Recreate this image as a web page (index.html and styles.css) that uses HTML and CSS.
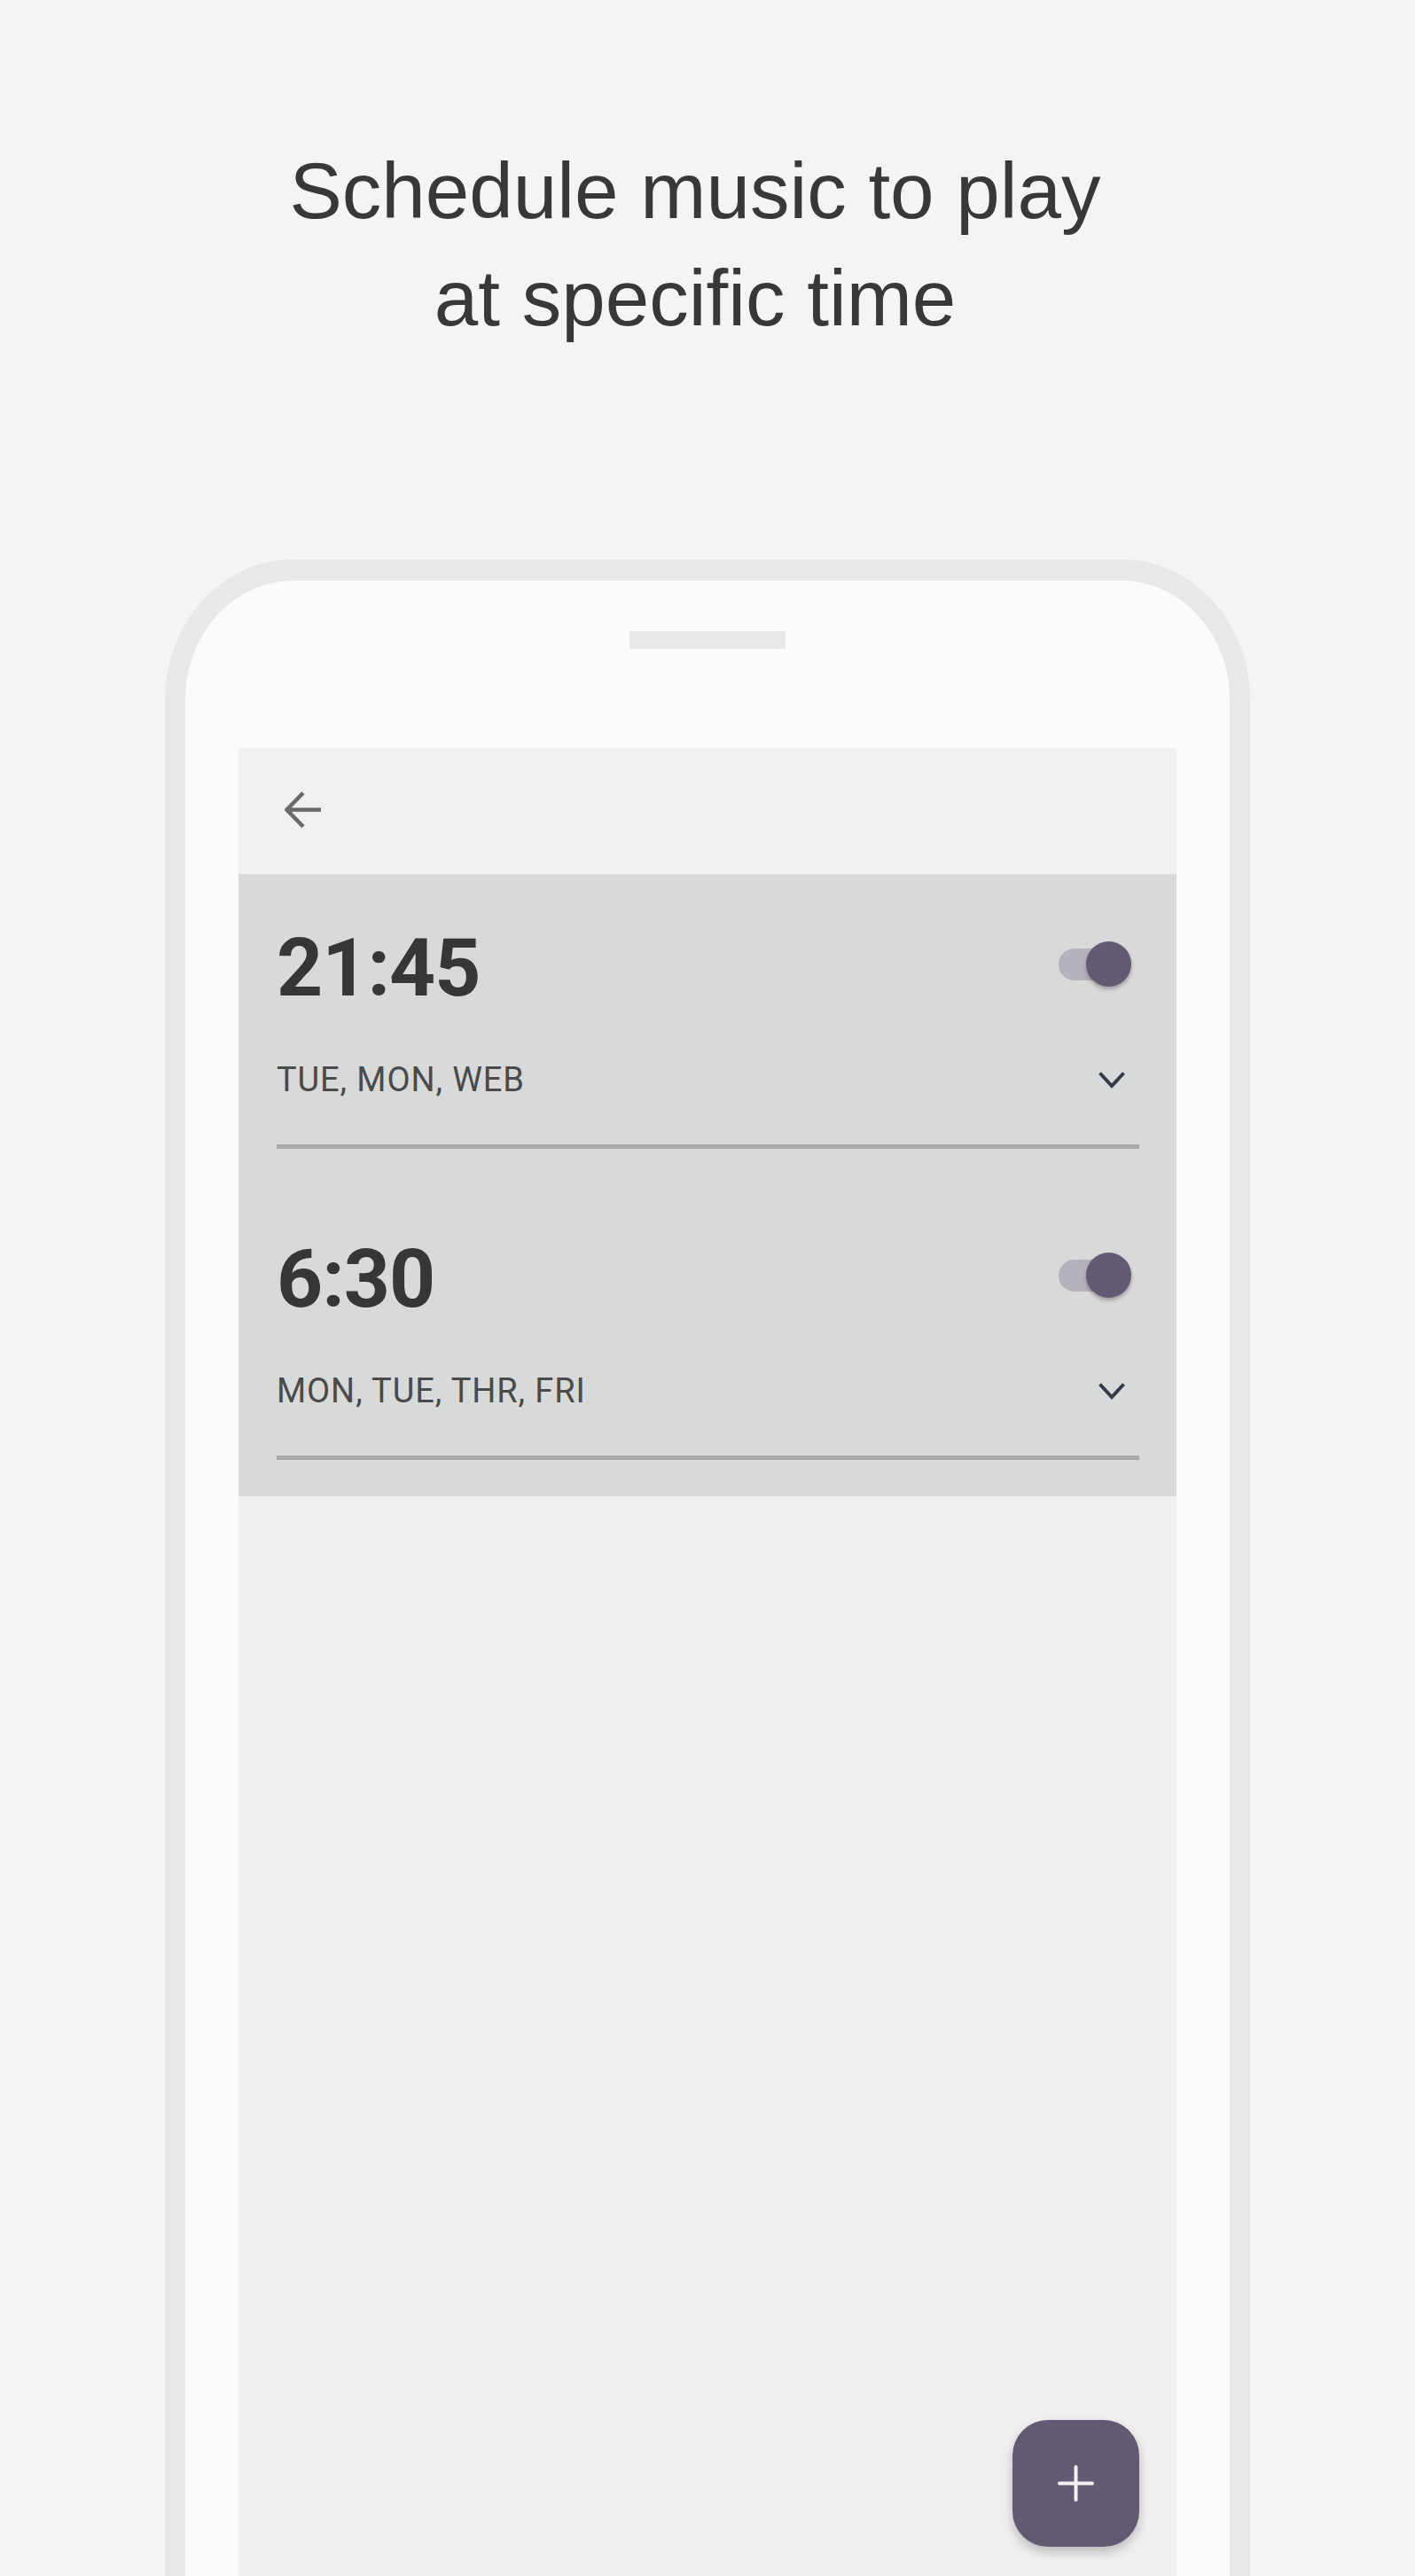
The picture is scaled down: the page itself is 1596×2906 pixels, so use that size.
FILE: index.html
```html
<!DOCTYPE html>
<html lang="en">
<head>
    <meta charset="UTF-8">
    <meta name="viewport" content="width=device-width, initial-scale=1.0">
    <title>Schedule music</title>
    <link rel="stylesheet" href="styles.css">
</head>
<body>
    <h1 class="headline">Schedule music to play<br>at specific time</h1>

    <div class="phone">
        <div class="phone-inner">
            <div class="speaker"></div>

            <div class="screen">
                <div class="app-bar">
                    <svg class="back-icon" width="41" height="41" viewBox="0 0 41 41">
                        <path d="M41 20.5H3M21 1.5L2.5 20.5L21 39.5" fill="none" stroke="#6a6a6a" stroke-width="4.5"/>
                    </svg>
                </div>

                <div class="alarm-list">
                    <div class="alarm">
                        <div class="alarm-top">
                            <span class="alarm-time">21:45</span>
                            <div class="toggle">
                                <span class="toggle-track"></span>
                                <span class="toggle-knob"></span>
                            </div>
                        </div>
                        <div class="alarm-days">
                            <span>TUE, MON, WEB</span>
                            <svg class="chevron" width="30" height="19" viewBox="0 0 30 19">
                                <path d="M1.5 1.5L15 16L28.5 1.5" fill="none" stroke="#343c4b" stroke-width="4"/>
                            </svg>
                        </div>
                        <div class="alarm-divider"></div>
                    </div>

                    <div class="alarm">
                        <div class="alarm-top">
                            <span class="alarm-time">6:30</span>
                            <div class="toggle">
                                <span class="toggle-track"></span>
                                <span class="toggle-knob"></span>
                            </div>
                        </div>
                        <div class="alarm-days">
                            <span>MON, TUE, THR, FRI</span>
                            <svg class="chevron" width="30" height="19" viewBox="0 0 30 19">
                                <path d="M1.5 1.5L15 16L28.5 1.5" fill="none" stroke="#343c4b" stroke-width="4"/>
                            </svg>
                        </div>
                        <div class="alarm-divider"></div>
                    </div>
                </div>

                <div class="screen-rest">
                    <button class="fab">
                        <svg width="41" height="41" viewBox="0 0 41 41">
                            <path d="M20.5 2V39M2 20.5H39" fill="none" stroke="#f2f2f2" stroke-width="4" stroke-linecap="round"/>
                        </svg>
                    </button>
                </div>
            </div>
        </div>
    </div>
</body>
</html>
```

FILE: styles.css
```css
html, body {
    height: 2906px;
    overflow: hidden;
}
body {
    margin: 0;
    background-color: #f4f4f4;
    font-family: Roboto, "Liberation Sans", sans-serif;
}
.headline {
    margin: 0;
    padding: 155px 28px 0 0;
    font-family: "Liberation Sans", Arial, sans-serif;
    font-weight: normal;
    font-size: 89px;
    line-height: 121px;
    color: #383838;
    text-align: center;
}

/* phone mockup */
.phone {
    width: 1224px;
    height: 2275px;
    box-sizing: border-box;
    margin: 234px auto 0;
    border: 23px solid #e8e8e8;
    border-top-width: 24px;
    border-bottom: none;
    border-radius: 145px 145px 0 0 / 158px 158px 0 0;
    background-color: #fbfbfb;
    overflow: hidden;
}
.phone-inner {
    height: 100%;
    box-sizing: border-box;
    display: flex;
    flex-direction: column;
    padding: 57px 60px 0;
}
.speaker {
    align-self: center;
    width: 176px;
    height: 20px;
    background-color: #e8e8e8;
    margin-bottom: 112px;
}
.screen {
    flex: 1;
    display: flex;
    flex-direction: column;
    background-color: #efefef;
}
.app-bar {
    height: 142px;
    flex-shrink: 0;
    display: flex;
    align-items: center;
    background-color: #f0f0f0;
}
.back-icon {
    margin-left: 52px;
    margin-bottom: 3px;
}

/* alarms */
.alarm-list {
    background-color: #d8d9d9;
}
.alarm {
    padding: 52px 42px 41px 43px;
}
.alarm-top {
    display: flex;
    justify-content: space-between;
    align-items: center;
}
.alarm-time {
    font-size: 91px;
    font-weight: 700;
    line-height: 108px;
    letter-spacing: -1px;
    color: #363636;
}
.toggle {
    position: relative;
    width: 82px;
    height: 51px;
    margin-right: 9px;
    margin-bottom: 10px;
}
.toggle-track {
    position: absolute;
    left: 0;
    top: 8px;
    width: 74px;
    height: 36px;
    border-radius: 18px;
    background-color: #b5b2bb;
}
.toggle-knob {
    position: absolute;
    right: 0;
    top: 0;
    width: 51px;
    height: 51px;
    border-radius: 50%;
    background-color: #625a72;
    box-shadow: 0 3px 4px rgba(0,0,0,0.28);
}
.alarm-days {
    display: flex;
    justify-content: space-between;
    align-items: center;
    margin-top: 50px;
    font-size: 38px;
    line-height: 45px;
    color: #4a4a4a;
    letter-spacing: 0.9px;
}
.chevron {
    margin-right: 16px;
}
.alarm-divider {
    height: 5px;
    margin-top: 50px;
    background-color: #a9a9a9;
}

/* empty area with floating button */
.screen-rest {
    flex: 1;
    display: flex;
    justify-content: flex-end;
    align-items: flex-end;
    padding: 0 42px 33px 0;
}
.fab {
    width: 143px;
    height: 143px;
    display: flex;
    align-items: center;
    justify-content: center;
    padding: 0;
    border: none;
    border-radius: 40px;
    background-color: #625a72;
    box-shadow: 0 6px 12px rgba(0,0,0,0.22);
}
```
